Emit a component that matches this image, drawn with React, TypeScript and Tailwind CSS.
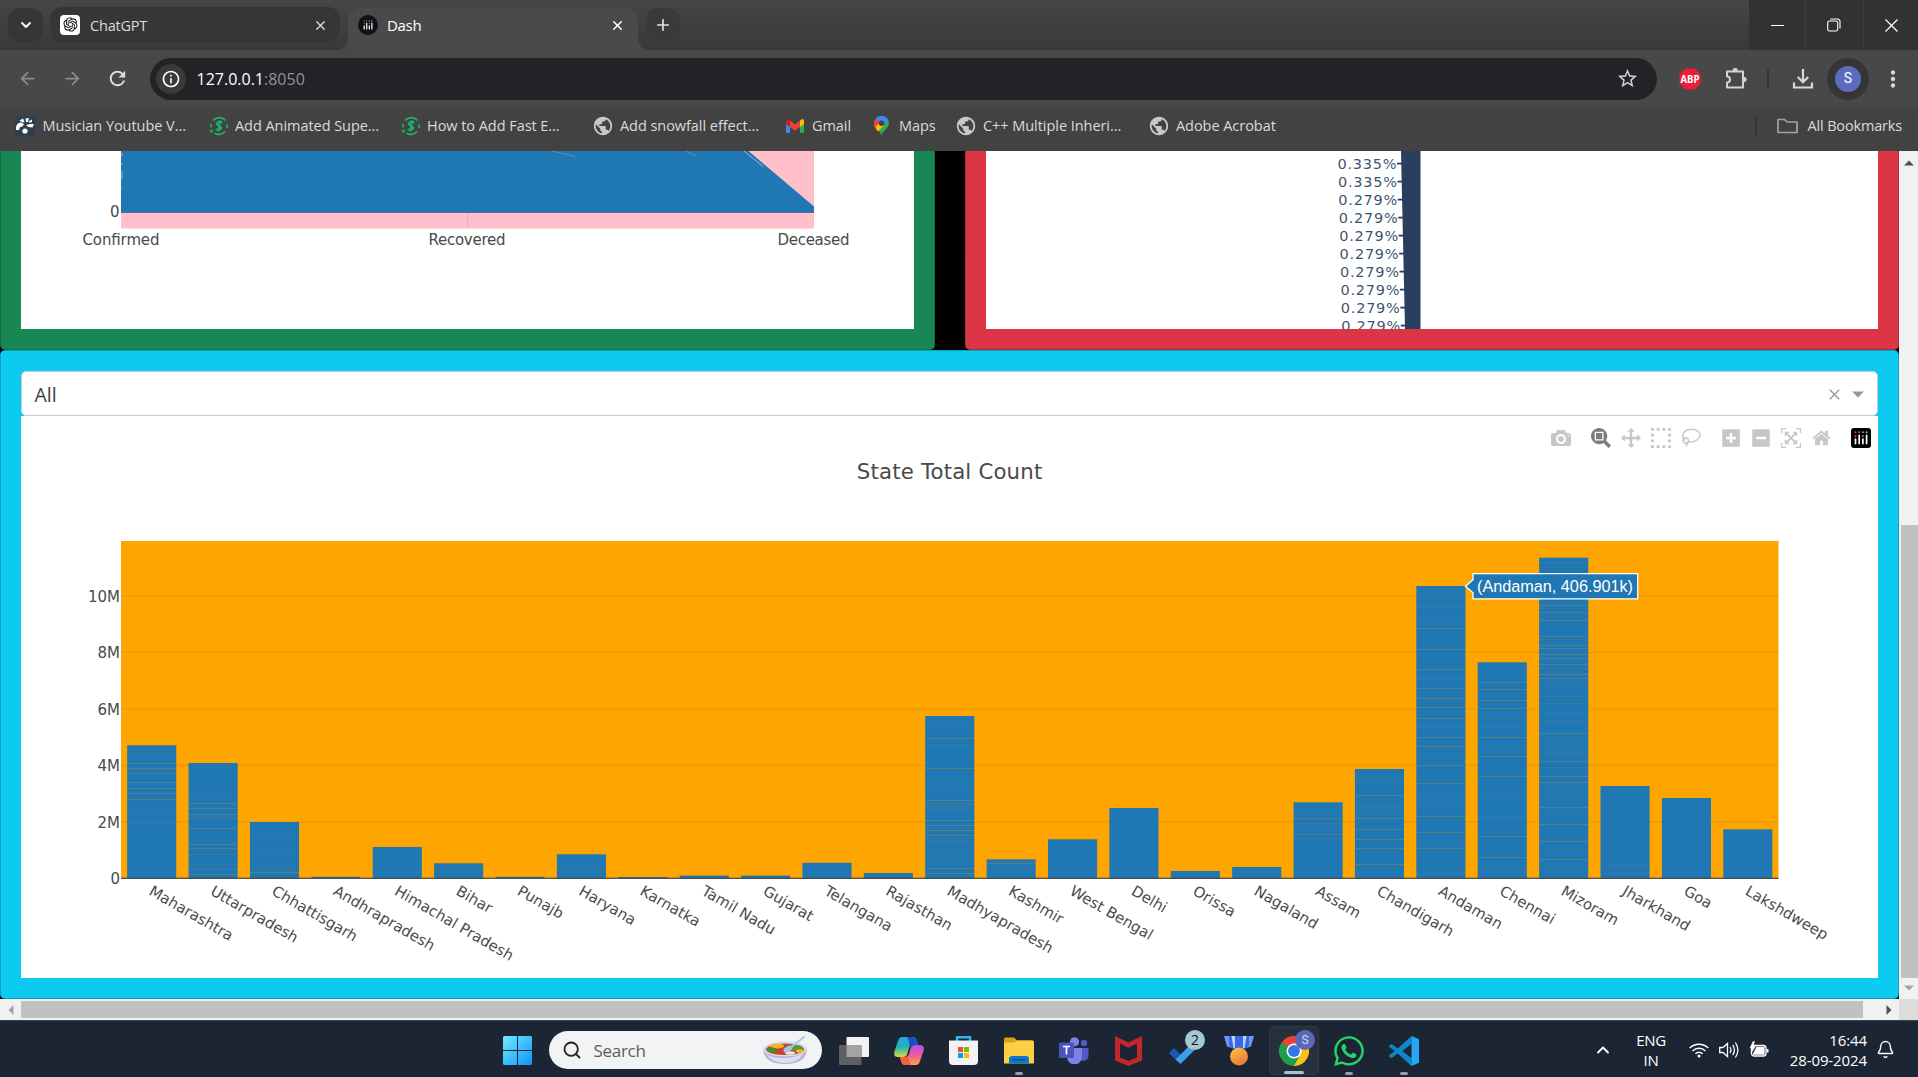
import React from "react";
import { MdArrowBack, MdArrowForward, MdRefresh, MdPublic, MdStarBorder, MdMoreVert, MdOutlineInfo } from "react-icons/md";
import { RiOpenaiFill } from "react-icons/ri";
import { FaWhatsapp } from "react-icons/fa";
import { X, Plus, ChevronDown, ChevronUp, Bell, Search } from "lucide-react";

const PLOT_FONT = "'DejaVu Sans', Verdana, sans-serif";

/* ---------- browser chrome ---------- */

function DashMark({ size, round }: { size: number; round: boolean }) {
  return (
    <svg width={size} height={size} viewBox="0 0 20 20" className="block shrink-0">
      <rect width="20" height="20" rx={round ? 10 : 3} fill={round ? "#101114" : "#000"} />
      <g transform={round ? "translate(3 3) scale(.7)" : undefined}>
        <g fill="#e83a6d">
          <circle cx="4.5" cy="4.2" r="1" /><circle cx="4.5" cy="8" r="1" /><circle cx="8.2" cy="4.2" r="1" />
        </g>
        <circle cx="11.9" cy="4.2" r="1" fill="#a58fd0" />
        <circle cx="15.6" cy="4.2" r="1" fill="#58c6ea" />
        <circle cx="11.9" cy="8" r="1" fill="#8f7fd6" />
        <g stroke="#fff" strokeWidth="1.7" strokeLinecap="round">
          <path d="M4.5 11.2v4.4M8.2 7.4v8.2M11.9 11.2v4.4M15.6 7.4v8.2" />
        </g>
      </g>
    </svg>
  );
}

function TabStrip() {
  return (
    <div className="flex h-[50px] shrink-0 bg-gradient-to-b from-[#464646] to-[#393939]">
      <div className="ml-2 mt-2 flex h-[34px] w-[35px] items-center justify-center rounded-[12px] bg-[#363636] text-white">
        <ChevronDown size={16} strokeWidth={2.8} />
      </div>
      <div className="ml-[7px] mt-[7px] flex h-[35px] w-[290px] items-center rounded-[12px] bg-[#363636] pl-[10px] text-[14.500px] text-[#dcdcdc]">
        <span className="flex h-5 w-5 items-center justify-center rounded-[4px] bg-white text-black"><RiOpenaiFill size={17} /></span>
        <span className="ml-[10px] grow pt-[2px] tracking-[-0.2px]">ChatGPT</span>
        <X size={15} strokeWidth={2.2} className="mr-[12px] mt-px" />
      </div>
      <div className="relative ml-2 mt-2 flex h-[42px] w-[290px] items-start rounded-t-[13px] bg-[#4a4a4a] pl-[10px] text-[15px] text-white">
        <svg className="absolute -left-[12px] bottom-0" width="12" height="12"><path d="M12 0V12H0A12 12 0 0 0 12 0" fill="#484848" /></svg>
        <svg className="absolute -right-[12px] bottom-0" width="12" height="12"><path d="M0 0V12H12A12 12 0 0 1 0 0" fill="#484848" /></svg>
        <div className="flex h-[34px] w-full items-center">
          <DashMark size={20} round />
          <span className="ml-[9px] grow tracking-[-0.3px]">Dash</span>
          <X size={15} strokeWidth={2.4} className="mr-[13px]" />
        </div>
      </div>
      <div className="ml-2 mt-2 flex h-[34px] w-[34px] items-center justify-center rounded-[12px] bg-[#3a3a3a] text-[#e4e4e4]">
        <Plus size={18} strokeWidth={2.2} />
      </div>
      <div className="ml-auto flex h-[50px] w-[169px] bg-[#323232] text-white">
        <div className="flex w-[57px] items-center justify-center border-r border-[#3e3e3e]"><span className="h-px w-[13px] bg-white" /></div>
        <div className="flex w-[58px] items-center justify-center border-r border-[#3e3e3e] pr-[2px]">
          <svg width="14" height="14" fill="none" stroke="#fff" strokeWidth="1.1"><rect x=".7" y="3" width="10" height="10" rx="1.8" /><path d="M3.3 1H10.500a2.500 2.500 0 0 1 2.500 2.500V10.500" /></svg>
        </div>
        <div className="flex w-[54px] items-center justify-center">
          <svg width="13" height="13" stroke="#fff" strokeWidth="1.200"><path d="M.5 .5l12 12M12.500 .5l-12 12" /></svg>
        </div>
      </div>
    </div>
  );
}

function Toolbar() {
  return (
    <div className="flex h-[57px] shrink-0 items-center bg-[#484848] text-[#d8d8d8]">
      <div className="flex w-[150px] items-center pl-[17px] text-[#8a8a8a]">
        <MdArrowBack size={21} /><MdArrowForward size={21} className="ml-[24px]" /><MdRefresh size={23} className="ml-[23px] text-[#dedede]" />
      </div>
      <div className="flex h-[42px] w-[1507px] items-center rounded-full bg-[#222327] pl-[6px]">
        <span className="flex h-[30px] w-[30px] items-center justify-center rounded-full bg-[#3a3a3a] text-white"><MdOutlineInfo size={20} /></span>
        <span className="ml-[10.500px] grow pt-px text-[16px] text-white">127.0.0.1<span className="text-[#929292]">:8050</span></span>
        <MdStarBorder size={23} className="mr-[18px] text-[#d0d0d0]" />
      </div>
      <svg width="22" height="22" viewBox="0 0 22 22" className="ml-[22px]">
        <path d="M6.500.5h9l6 6v9l-6 6h-9l-6-6v-9z" fill="#ee1b3b" />
        <text x="11" y="15" textAnchor="middle" fontFamily="'Open Sans', sans-serif" fontSize="11" fontWeight="700" fill="#fff" textLength="19" lengthAdjust="spacingAndGlyphs">ABP</text>
      </svg>
      <svg width="22" height="22" viewBox="0 0 22 22" className="ml-[24px]" fill="none" stroke="#d4d4d4" strokeWidth="2" strokeLinejoin="round">
        <path d="M2 3.500h16v16H2v-5a3 3 0 0 0 0-6z" /><path d="M8 2.500a2.200 2.200 0 0 1 4.400 0zM19 9.300a2.200 2.200 0 0 1 0 4.400z" fill="#d4d4d4" strokeWidth="1" />
      </svg>
      <span className="ml-[20px] h-5 w-[2px] bg-[#373737]" />
      <svg width="22" height="22" viewBox="0 0 22 22" className="ml-[23px]" fill="none" stroke="#d8d8d8" strokeWidth="2.200">
        <path d="M11 1v13M5.800 9l5.200 5.200L16.200 9M2 14.500v5h18v-5" />
      </svg>
      <span className="ml-[13px] flex h-[42px] w-[42px] items-center justify-center rounded-full bg-[#353535]">
        <span className="flex h-[26px] w-[26px] items-center justify-center rounded-full bg-[#5c6bc0] font-[Roboto] text-[14px] text-white">S</span>
      </span>
      <MdMoreVert size={26} className="ml-[11px]" />
    </div>
  );
}

const Video = () => (
  <svg width="20" height="20" viewBox="0 0 20 20"><rect width="20" height="20" rx="2" fill="#2c4052" /><g fill="#fff"><path d="M1 14Q.5 6.500 6 6.500l3 1.500-1.500 2.500-2.500.5-1 3zM4.500 4.500L8 2.500l1.500 3.500-2 .5zM10.500 2.500l3.500-.5-1 4-2 0zM14 5l3-1.500v2.500l-2.500 1zM15 8h4l-1.500 3.500-4-.5-2.500-2z" /><circle cx="10" cy="15" r="2.600" /></g></svg>
);
const Swirl = () => (
  <svg width="20" height="20" viewBox="0 0 20 20" fill="none" stroke="#1fae6b" strokeWidth="1.700">
    <path d="M4 4.500A8.300 8.300 0 0 1 16.500 4.500M18 8.500V12M16 15.500A8.300 8.300 0 0 1 5.500 17.300M2 8v3.500" />
    <circle cx="2.500" cy="15" r="1.600" fill="#1fae6b" stroke="none" />
    <path d="M13.200 6.700c-2-1.600-5.500-1-5.500 1 0 2.500 4.500 1.800 4.500 4.300 0 2-3.500 2.600-5.400 1M10.800 4.200l-1.300 11.500" strokeWidth="1.900" />
  </svg>
);
const Globe = () => <MdPublic size={22} className="-ml-[2px] shrink-0 text-[#c6c8cc]" />;
const Gmail = () => (
  <svg width="18" height="14" viewBox="0 0 18 14"><path d="M0 2h4v12H1.200A1.200 1.200 0 0 1 0 12.800z" fill="#4285f4" /><path d="M14 2h4v10.800a1.200 1.200 0 0 1-1.200 1.200H14z" fill="#34a853" /><path d="M0 2Q0 .2 2 0l2 1.500V8L0 5z" fill="#c5221f" /><path d="M18 2Q18 .2 16 0l-2 1.500V8l4-3z" fill="#fbbc04" /><path d="M4 1.500L9 5.300l5-3.800V8l-5 3.800L4 8z" fill="#ea4335" /></svg>
);
const Pin = () => (
  <svg width="15" height="20" viewBox="0 0 15 20" className="ml-px"><path d="M7.500 20C7 15 0 12 0 7.500a7.500 7.500 0 0 1 15 0C15 12 8 15 7.500 20" fill="#34a853" /><path d="M0 7.500L6 6l4 3.500L4 15.500C1.500 12.500 0 10 0 7.500" fill="#fbbc04" /><path d="M0 7.500a7.500 7.500 0 0 1 2-5.200l4 3.500-5 6Q0 9 0 7.500" fill="#ea4335" /><path d="M2 2.300A7.500 7.500 0 0 1 14.300 4.400L9 9 5 6z" fill="#4285f4" /><circle cx="7.500" cy="7.300" r="2.700" fill="#424242" /></svg>
);

const bookmarks = [
  { label: "Musician Youtube V...", icon: <Video />, box: "w-[194px]", gap: "w-[27.500px]" },
  { label: "Add Animated Supe...", icon: <Swirl />, box: "w-[192px]", gap: "w-[26px]" },
  { label: "How to Add Fast E...", icon: <Swirl />, box: "w-[193px]", gap: "w-[26px]" },
  { label: "Add snowfall effect...", icon: <Globe />, box: "w-[192px]", gap: "w-[26px]" },
  { label: "Gmail", icon: <Gmail />, box: "w-[87px]", gap: "w-[26px]" },
  { label: "Maps", icon: <Pin />, box: "w-[84px]", gap: "w-[26px]" },
  { label: "C++ Multiple Inheri...", icon: <Globe />, box: "w-[193px]", gap: "w-[26px]" },
  { label: "Adobe Acrobat", icon: <Globe />, box: "w-[160px]", gap: "w-[26px]" },
];

function BookmarksBar() {
  return (
    <div className="flex h-[44px] shrink-0 items-start bg-[#424242] pl-[15px] text-[14.500px] text-[#dadada]">
      {bookmarks.map((b) => (
        <div key={b.label} className={"flex h-[38px] shrink-0 items-center whitespace-nowrap " + b.box}>
          <span className={"flex shrink-0 " + b.gap}>{b.icon}</span>
          <span className="tracking-[-0.050px]">{b.label}</span>
        </div>
      ))}
      <div className="ml-auto flex h-[38px] items-center pr-[16px]">
        <span className="mr-[20px] h-5 w-[2px] bg-[#363636]" />
        <svg width="21" height="16" viewBox="0 0 21 16" fill="none" stroke="#a4a4a4" strokeWidth="1.700" strokeLinejoin="round"><path d="M1 14.500V1.500h6.500l2.500 2.500h10v10.500z" /></svg>
        <span className="ml-[10px] tracking-[-0.170px]">All Bookmarks</span>
      </div>
    </div>
  );
}

/* ---------- dashboard ---------- */

function AreaChart() {
  return (
    <svg width="893" height="178" viewBox="21 151 893 178" className="block bg-white" fontFamily={PLOT_FONT} fontSize="15" fill="#4a4a4a">
      <rect x="121" y="151" width="693" height="77.500" fill="#ffc0cb" />
      <path d="M467.500 151v77.500" stroke="#444" strokeOpacity=".12" />
      <path d="M121 151H748.500L814 206.500V212.800H121z" fill="#1f77b4" />
      <path d="M744 151l19 15.500" stroke="#ffc0cb" opacity=".7" fill="none" />
      <path d="M552 151l23 5.500M686 151l10 4.500" stroke="#ffc0cb" opacity=".3" fill="none" />
      <path d="M122 153v3M122 163v2M122 171v8M122 187v1" stroke="#9ab4d4" strokeWidth="2" opacity=".5" />
      <path d="M121 212.500H814" stroke="#444" strokeOpacity=".35" />
      <text x="119.500" y="217" textAnchor="end">0</text>
      <text x="121" y="245" textAnchor="middle" textLength="77">Confirmed</text>
      <text x="467" y="245" textAnchor="middle" textLength="77">Recovered</text>
      <text x="813.500" y="245" textAnchor="middle" textLength="72">Deceased</text>
    </svg>
  );
}

function PieLabels() {
  const rows = ["0.335%", "0.335%", "0.279%", "0.279%", "0.279%", "0.279%", "0.279%", "0.279%", "0.279%", "0.279%"];
  return (
    <svg width="892" height="178" viewBox="986 151 892 178" className="block bg-white" fontFamily={PLOT_FONT} fontSize="14.500" fill="#2a3f5f">
      <path d="M1401 151H1420.500V329H1405z" />
      {rows.map((r, i) => (
        <g key={i}>
          <text x={1396.5 + i * 0.42} y={169 + i * 18} textAnchor="end" textLength="59" fillOpacity=".92">{r}</text>
          <rect x={1397 + i * 0.42} y={162.700 + i * 18} width="6" height="1.800" />
        </g>
      ))}
    </svg>
  );
}

type Bar = { name: string; top: number; lines?: number[]; faint?: number[] };
const bars: Bar[] = [
  { name: "Maharashtra", top: 745.3, lines: [763, 768, 773, 782, 788, 793, 799], faint: [749, 753, 813, 823] },
  { name: "Uttarpradesh", top: 763, lines: [803, 808, 814, 828, 844, 848, 874], faint: [798, 817, 819, 854, 864, 869] },
  { name: "Chhattisgarh", top: 822, lines: [872], faint: [838, 852, 869] },
  { name: "Andhrapradesh", top: 876.8 },
  { name: "Himachal Pradesh", top: 847 },
  { name: "Bihar", top: 863.3, faint: [869] },
  { name: "Punajb", top: 876.8 },
  { name: "Haryana", top: 854.3, faint: [867] },
  { name: "Karnatka", top: 877 },
  { name: "Tamil Nadu", top: 875.6 },
  { name: "Gujarat", top: 875.6 },
  { name: "Telangana", top: 862.8 },
  { name: "Rajasthan", top: 873 },
  { name: "Madhyapradesh", top: 716, lines: [738, 768, 800, 820, 825, 830, 835, 868, 873], faint: [722, 744, 779, 785, 803, 805, 808, 838, 841, 843, 854, 859] },
  { name: "Kashmir", top: 859.3, lines: [863], faint: [869] },
  { name: "West Bengal", top: 839.3 },
  { name: "Delhi", top: 808 },
  { name: "Orissa", top: 871 },
  { name: "Nagaland", top: 867 },
  { name: "Assam", top: 802.3, lines: [818, 834], faint: [813, 823, 828, 838] },
  { name: "Chandigarh", top: 769, lines: [795, 818, 829, 839, 848, 864], faint: [778, 807, 814] },
  { name: "Andaman", top: 586, lines: [628, 649, 669, 688, 698, 707, 718, 737, 746, 765, 783, 816, 832, 848], faint: [597, 607, 618, 679, 727, 757, 795, 801, 842, 873] },
  { name: "Chennai", top: 662.3, lines: [682, 689, 700, 708, 737, 756, 776, 836, 857], faint: [718, 727, 747, 796, 816, 869] },
  { name: "Mizoram", top: 557.7, lines: [605, 612, 620, 636, 645, 648, 654, 658, 664, 674, 678, 733, 761, 776, 782, 807, 824, 841, 859], faint: [562, 567, 608, 639, 668, 685, 696, 703, 712, 720, 738, 746, 752, 767, 790, 797, 814, 849, 867] },
  { name: "Jharkhand", top: 786, faint: [864, 873] },
  { name: "Goa", top: 798 },
  { name: "Lakshdweep", top: 829.3 },
];
const STEP = 61.39;
const ZERO = 878.4;

function StateChart() {
  return (
    <svg width="1857" height="562" viewBox="21 416 1857 562" className="block bg-white" fontFamily={PLOT_FONT} fontSize="15" fill="#4a4a4a">
      <text x="949.500" y="478.700" textAnchor="middle" fontSize="21.250" textLength="185.500">State Total Count</text>
      <rect x="121" y="541" width="1657.500" height="337.500" fill="orange" />
      {[1, 2, 3, 4, 5].map((n) => (
        <rect key={n} x="121" y={ZERO - n * 56.5 - 0.7} width="1657.500" height="1.300" fill="#444" fillOpacity=".12" />
      ))}
      {bars.map((b, i) => {
        const x = 121 + STEP * (i + 0.1);
        const w = STEP * 0.8;
        return (
          <g key={b.name}>
            <rect x={x} y={b.top} width={w} height={ZERO - b.top} fill="#1f77b4" />
            {(b.lines ?? []).map((y) => <rect key={y} x={x} y={y} width={w} height="1" fill="#9b8c4b" fillOpacity=".45" />)}
            {(b.faint ?? []).map((y) => <rect key={y} x={x} y={y} width={w} height="1" fill="#9b8c4b" fillOpacity=".18" />)}
          </g>
        );
      })}
      <rect x="121" y="877.700" width="1657.500" height="1.200" fill="#444" />
      {["0", "2M", "4M", "6M", "8M", "10M"].map((t, n) => (
        <text key={t} x="120" y={ZERO - n * 56.5 + 5.6} textAnchor="end">{t}</text>
      ))}
      {bars.map((b, i) => {
        const x = 121 + STEP * (i + 0.5) - 3.7;
        return <text key={b.name} x={x} y="894" transform={`rotate(30 ${x} 894)`} fontSize="14.900">{b.name}</text>;
      })}
      <path d="M1465.500 586.300l7.500-6.500v-6.300H1637.700v25.300H1473v-6z" fill="#1f77b4" stroke="#fff" strokeWidth="1.250" />
      <text x="1477" y="592" fontFamily="'Liberation Sans', Arial, sans-serif" fontSize="16.250" fill="#fff" textLength="156">(Andaman, 406.901k)</text>
    </svg>
  );
}

const modeIcons: { d: string; w: number; on?: boolean; cls: string }[] = [
  { w: 1000, cls: "mr-[20px]", d: "m500 450c-83 0-150-67-150-150 0-83 67-150 150-150 83 0 150 67 150 150 0 83-67 150-150 150z m400 150h-120c-16 0-34 13-39 29l-31 93c-6 15-23 28-40 28h-340c-16 0-34-13-39-28l-31-94c-6-15-23-28-40-28h-120c-55 0-100-45-100-100v-450c0-55 45-100 100-100h800c55 0 100 45 100 100v450c0 55-45 100-100 100z m-400-550c-138 0-250 112-250 250 0 138 112 250 250 250 138 0 250-112 250-250 0-138-112-250-250-250z m365 380c-19 0-35 16-35 35 0 19 16 35 35 35 19 0 35-16 35-35 0-19-16-35-35-35z" },
  { w: 1000, on: true, cls: "mr-[10px]", d: "m1000-25l-250 251c40 63 63 138 63 218 0 224-182 406-407 406-224 0-406-182-406-406s183-406 407-406c80 0 155 22 218 62l250-250 125 125z m-812 250l0 438 437 0 0-438-437 0z m62 375l313 0 0-312-313 0 0 312z" },
  { w: 1000, cls: "mr-[10px]", d: "m1000 350l-187 188 0-125-250 0 0 250 125 0-188 187-187-187 125 0 0-250-250 0 0 125-188-188 186-187 0 125 252 0 0-250-125 0 187-188 188 188-125 0 0 250 250 0 0-126 187 188z" },
  { w: 1000, cls: "mr-[10px]", d: "m0 850l0-143 143 0 0 143-143 0z m286 0l0-143 143 0 0 143-143 0z m285 0l0-143 143 0 0 143-143 0z m286 0l0-143 143 0 0 143-143 0z m-857-286l0-143 143 0 0 143-143 0z m857 0l0-143 143 0 0 143-143 0z m-857-285l0-143 143 0 0 143-143 0z m857 0l0-143 143 0 0 143-143 0z m-857-286l0-143 143 0 0 143-143 0z m286 0l0-143 143 0 0 143-143 0z m285 0l0-143 143 0 0 143-143 0z m286 0l0-143 143 0 0 143-143 0z" },
];
const modeIcons2: { d: string; w: number; cls: string }[] = [
  { w: 875, cls: "w-[18px] mr-[12px]", d: "m1 787l0-875 875 0 0 875-875 0z m687-500l-187 0 0-187-125 0 0 187-188 0 0 125 188 0 0 187 125 0 0-187 187 0 0-125z" },
  { w: 875, cls: "w-[18px] mr-[11px]", d: "m0 788l0-876 875 0 0 876-875 0z m688-500l-500 0 0 125 500 0 0-125z" },
  { w: 1000, cls: "w-[20px] mr-[11px]", d: "m250 850l-187 0-63 0 0-62 0-188 63 0 0 188 187 0 0 62z m688 0l-188 0 0-62 188 0 0-188 62 0 0 188 0 62-62 0z m-875-938l0 188-63 0 0-188 0-62 63 0 187 0 0 62-187 0z m875 188l0-188-188 0 0-62 188 0 62 0 0 62 0 188-62 0z m-125 188l-1 0-93-94-156 156 156 156 92-93 2 0 0 250-250 0 0-2 93-92-156-156-156 156 94 92 0 2-250 0 0-250 0 0 93 93 157-156-157-156-93 94 0 0 0-250 250 0 0 0-94 93 156 157 156-157-93-93 0 0 250 0 0 250z" },
  { w: 928.6, cls: "w-[19px] mr-[20px]", d: "m786 296v-267q0-15-11-26t-25-10h-214v214h-143v-214h-214q-15 0-25 10t-11 26v267q0 1 0 2t0 2l321 264 321-264q1-1 1-4z m124 39l-34-41q-5-5-12-6h-2q-7 0-12 3l-386 322-386-322q-7-4-13-4-7 2-12 7l-35 41q-4 5-3 13t6 12l401 334q18 15 42 15t43-15l136-114v109q0 8 5 13t13 5h107q8 0 13-5t5-13v-227l122-102q5-5 6-12t-4-13z" },
];

function ModeBar() {
  return (
    <div className="absolute right-[7px] top-[12px] flex h-5">
      {modeIcons.map((m, i) => (
        <svg key={i} viewBox={`0 0 ${m.w} 1000`} className={"h-5 w-5 " + m.cls} fill={m.on ? "#7c7c7c" : "#c7c7c7"}><path d={m.d} transform="matrix(1 0 0 -1 0 850)" /></svg>
      ))}
      <svg viewBox="0 0 20 20" className="mr-[21px] h-5 w-5" fill="none" stroke="#c7c7c7" strokeWidth="1.400">
        <path d="M4.500 12.500C-.5 9.500 1 2.500 9 1.500c7-.8 11.500 3 9.500 7.500-1.600 3.700-6.500 5.800-11 4.500" /><circle cx="4.700" cy="12.500" r="2.800" /><path d="M7 13.500c.3 1.800-1.800 2-1.500 5" />
      </svg>
      {modeIcons2.map((m, i) => (
        <svg key={i} viewBox={`0 0 ${m.w} 1000`} className={"h-5 " + m.cls} fill="#c7c7c7"><path d={m.d} transform="matrix(1 0 0 -1 0 850)" /></svg>
      ))}
      <DashMark size={20} round={false} />
    </div>
  );
}

function Page() {
  return (
    <div className="w-[1899px] overflow-hidden bg-black">
      <div className="flex h-[199px] justify-between">
        <div className="w-[935px] rounded-b-[5px] border border-t-0 border-black/20 bg-[#198754] pl-5"><AreaChart /></div>
        <div className="w-[934px] rounded-b-[5px] border border-t-0 border-black/20 bg-[#dc3545] pl-5"><PieLabels /></div>
      </div>
      <div className="h-[649px] rounded-[5px] border border-black/20 bg-[#0dcaf0] px-5 pt-5">
        <div className="bg-white">
          <div className="bg-[#0dcaf0]">
            <div className="flex h-[45px] items-center rounded-[5px] border border-[#ccc] bg-white pl-[12.500px] pr-[13px] text-[19.500px] text-[#3c3c3c]">
              <span className="grow pt-[2px]">All</span>
              <svg width="11" height="11" className="mr-[12px] mt-px" stroke="#999" strokeWidth="1.400"><path d="M.8.8l9.400 9.400M10.200.8L.8 10.200" /></svg>
              <svg width="12" height="7" className="mt-px"><path d="M0 .5h12L6 6.500z" fill="#999" /></svg>
            </div>
          </div>
          <div className="relative">
            <StateChart />
            <ModeBar />
          </div>
        </div>
      </div>
    </div>
  );
}

/* ---------- taskbar ---------- */

function Slot({ children, run, active }: { children: React.ReactNode; run?: boolean; active?: boolean }) {
  return (
    <div className="flex h-[57px] w-[55px] shrink-0 items-start justify-center pt-[5px]">
      <div className={"relative flex h-[49px] w-[50px] items-center justify-center rounded-[5px] " + (active ? "border border-white/5 bg-white/5" : "")}>
        {children}
        {run && <span className={"absolute bottom-0 h-[3px] rounded-full " + (active ? "w-5 bg-[#a3c5d4]" : "w-2 bg-[#9a9da3]")} />}
      </div>
    </div>
  );
}

function Taskbar() {
  return (
    <div className="flex h-[57px] shrink-0 border-t border-[#3b4450] bg-[#1c2533] text-white">
      <svg width="29" height="29" viewBox="0 0 29 29" className="ml-[503px] mt-[15px]">
        <defs><linearGradient id="win" x1="0" y1="0" x2="1" y2="1" gradientUnits="objectBoundingBox"><stop offset="0" stopColor="#6eeaff" /><stop offset="1" stopColor="#1095f8" /></linearGradient></defs>
        <path d="M1 0H14V14H0V1zM15 0H28l1 1V14H15zM0 15H14V29H1L0 28zM15 15H29V28l-1 1H15z" fill="url(#win)" />
      </svg>
      <div className="ml-[17px] mt-[10px] flex h-[38px] w-[273px] items-center rounded-full bg-[#f1f3f5] pl-[13px] pr-[14px]">
        <Search size={20} strokeWidth={2.200} color="#222" />
        <span className="ml-[11.500px] grow pt-px text-[17px] tracking-[-0.300px] text-[#5c5c5c]">Search</span>
        <svg width="46" height="29" viewBox="0 0 46 29">
          <path d="M1 13q1 15 22 15t22-15z" fill="#b5b2d2" /><path d="M4 18q6 9 19 9t18-9q-10 4-20 4T4 18" fill="#dedcf0" />
          <ellipse cx="23" cy="13" rx="22" ry="7.500" fill="#dcdaf0" /><ellipse cx="23" cy="13.300" rx="19" ry="5.800" fill="#b5522a" />
          <ellipse cx="15" cy="10" rx="7" ry="2.500" fill="#f3b521" /><ellipse cx="10" cy="14" rx="5" ry="2.500" fill="#4d8a2c" /><ellipse cx="35" cy="12" rx="6" ry="3" fill="#5d9a36" /><ellipse cx="19" cy="15.500" rx="5" ry="2.500" fill="#d63a2a" /><ellipse cx="38" cy="15" rx="4" ry="1.800" fill="#f0b830" /><ellipse cx="28" cy="17" rx="5" ry="1.800" fill="#f3e3cf" />
          <path d="M28 12L42 1" stroke="#a9cdf2" strokeWidth="2" strokeLinecap="round" /><ellipse cx="26" cy="13" rx="5" ry="2.600" fill="#9fc6ef" transform="rotate(-30 26 13)" />
        </svg>
      </div>
      <div className="ml-[4.500px] flex">
        <Slot><svg width="30" height="28" viewBox="0 0 30 28"><rect x="7.500" width="22.500" height="20" rx="1" fill="#f2f2f2" /><rect y="8" width="22.500" height="20" rx="1" fill="#5e5f62" /><rect x="7.500" y="8" width="15" height="12" fill="#a3a3a3" /></svg></Slot>
        <Slot>
          <svg width="30" height="28" viewBox="0 0 30 28">
            <defs>
              <linearGradient id="cpa" x1="0" y1="0" x2="0" y2="1"><stop offset="0" stopColor="#22a4ee" /><stop offset=".5" stopColor="#27b0b5" /><stop offset="1" stopColor="#d8dc3a" /></linearGradient>
              <linearGradient id="cpb" x1="0" y1="0" x2="0" y2="1"><stop offset="0" stopColor="#a755ef" /><stop offset=".5" stopColor="#ee5a9a" /><stop offset="1" stopColor="#fba346" /></linearGradient>
            </defs>
            <path d="M8 0H19q3 0 4 4l1 4H18q-2 0-3 3l-2 7q-1 2-4 2H4q-5 0-3.500-6L4 4Q5 0 8 0" fill="url(#cpa)" />
            <path d="M13 0h6q3 0 4 4l1 4H18q-1.500 0-2.500 1Q15 3 13 0" fill="#1c4fc4" />
            <path d="M22 28H11q-3 0-4-4l-1-4h6q2 0 3-3l2-7q1-2 4-2h5q5 0 3.500 6L26 24q-1 4-4 4" fill="url(#cpb)" />
            <path d="M17 28h-6q-3 0-4-4l-1-4h6q1.500 0 2.500-1 .5 6 2.500 9" fill="#f0603a" />
          </svg>
        </Slot>
        <Slot><svg width="29" height="29" viewBox="0 0 29 29" className="-ml-px"><path d="M8 5V1.200h13V5" fill="none" stroke="#2cb6f2" strokeWidth="2.400" /><path d="M0 4.500H29V25a4 4 0 0 1-4 4H4a4 4 0 0 1-4-4z" fill="#f3f3f3" /><path d="M9 11h5v5H9z" fill="#f25022" /><path d="M15 11h5v5h-5z" fill="#7fba00" /><path d="M9 17h5v5H9z" fill="#00a4ef" /><path d="M15 17h5v5h-5z" fill="#ffb900" /></svg></Slot>
        <Slot run><svg width="30" height="27" viewBox="0 0 30 27"><path d="M0 2a1.500 1.500 0 0 1 1.500-1.500H10l3 3H28.500A1.500 1.500 0 0 1 30 5v8H0z" fill="#e0a010" /><path d="M0 5.500h10l3-2h15.500L30 5v21.500H0z" fill="#fccf45" /><path d="M5 26.500V22a3 3 0 0 1 3-3h14a3 3 0 0 1 3 3v4.500z" fill="#0f78c8" /><path d="M8.500 22.700h13" stroke="#0a4f8c" strokeWidth="1.400" /></svg></Slot>
        <Slot><svg width="30" height="27" viewBox="0 0 30 27"><circle cx="15.500" cy="4.800" r="4.600" fill="#7b83eb" /><circle cx="25" cy="6" r="3.200" fill="#5059c9" /><path d="M20 11h9.500v8a5 5 0 0 1-9.500 2z" fill="#5059c9" /><path d="M8 11h15v9a7 7 0 0 1-15 0z" fill="#7b83eb" /><rect y="5.500" width="15" height="15.500" rx="1.500" fill="#4b53bc" /><path d="M4 9.500h7M7.500 9.500v8" stroke="#fff" strokeWidth="1.700" /></svg></Slot>
        <Slot><svg width="27" height="30" viewBox="0 0 27 30" className="-ml-px"><path d="M0 0l13.500 6.500L27 0v24.500L13.500 30 0 24.500zM5 7.500v14l8.500 3.500 8.500-3.500v-14l-8.500 4.300z" fill="#c4262c" fillRule="evenodd" /></svg></Slot>
        <Slot>
          <svg width="30" height="28" viewBox="0 0 30 28"><path d="M0 16l5-5 7.500 7.500-5 5z" fill="#1b58b8" /><path d="M6.500 22.500L24 5l5 4.500L11.500 27z" fill="#3f9ee8" /></svg>
          <span className="absolute left-[26px] top-[4px] flex h-5 w-5 items-center justify-center rounded-full bg-[#a3c8d4] text-[14px] leading-none text-[#111]">2</span>
        </Slot>
        <Slot><svg width="30" height="30" viewBox="0 0 30 30"><defs><linearGradient id="medal" x1="0" y1="0" x2=".5" y2="1"><stop offset="0" stopColor="#ffc53c" /><stop offset="1" stopColor="#ed7a3e" /></linearGradient></defs><path d="M0 0h6l2 12-5-1.500zM30 0h-6l-2 12 5-1.500z" fill="#6f95f5" /><path d="M5 0h20v9q-2 4-5 4H10q-3 0-5-4z" fill="#3569ea" /><path d="M7.500 0h3.500v12H9.500zM22.500 0H19v12h1.500z" fill="#bcd2fc" /><circle cx="15" cy="20.500" r="9" fill="url(#medal)" /></svg></Slot>
        <Slot run active>
          <svg width="30" height="30" viewBox="0 0 48 48"><path d="M24 24L3.200 12A24 24 0 0 1 44.800 12z" fill="#ea4335" /><path d="M24 24L44.800 12A24 24 0 0 1 24 48z" fill="#fbc116" /><path d="M24 24V48A24 24 0 0 1 3.200 12z" fill="#1e9e48" /><path d="M24 12H44.800L34.500 30 24 48z" fill="#fbc116" /><path d="M13.600 30L3.200 12l10 3zM13.600 30L24 48l10.400-18z" fill="#1e9e48" /><path d="M34.500 30L24 48H26l18-30z" fill="#fbc116" /><circle cx="24" cy="24" r="12" fill="#fff" /><circle cx="24" cy="24" r="9.500" fill="#3077ea" /></svg>
          <span className="absolute left-[25px] top-[3px] flex h-[20px] w-[20px] items-center justify-center rounded-full bg-[#5b68b8] font-[Roboto] text-[12px] text-[#d4d8ee]">S</span>
        </Slot>
        <Slot run><FaWhatsapp size={34} color="#25d366" /></Slot>
        <Slot run>
          <svg width="30" height="30" viewBox="0 0 100 100"><path d="M75 0L29 42 9 27 1 30.500v6L20 50 1 63.500v6L9 73l20-15 46 42V73L44 50l31-23z" fill="#0f85d0" /><path d="M75 0l25 11v78L75 100V0" fill="#26a7f2" /></svg>
        </Slot>
      </div>
      <div className="ml-auto flex h-[57px] items-center text-[15px] leading-5">
        <ChevronUp size={20} strokeWidth={2.200} className="mr-[22px]" />
        <div className="mr-[22px] w-[32px] pt-px text-center text-[15px] tracking-[-0.300px]">ENG<br />IN</div>
        <svg width="20" height="16" viewBox="0 0 20 16" fill="none" stroke="#fff" strokeWidth="1.500"><path d="M.7 6a13.200 13.200 0 0 1 18.600 0M3.600 9a9 9 0 0 1 12.800 0M6.400 11.800a5 5 0 0 1 7.200 0" /><circle cx="10" cy="14" r="1.500" fill="#fff" stroke="none" /></svg>
        <svg width="20" height="18" viewBox="0 0 20 18" fill="none" stroke="#fff" strokeWidth="1.300" className="ml-[10px]"><path d="M.7 6.500H4l4.500-4v13L4 11.500H.7zM11 6q2 3 0 6M13.700 3.800q3.500 5.200 0 10.400M16.400 1.500q5 7.500 0 15" /></svg>
        <svg width="20" height="18" viewBox="0 0 20 18" fill="none" stroke="#fff" strokeWidth="1.300" className="ml-[10px]"><rect x="2.500" y="4.500" width="14.500" height="10.500" rx="2.500" /><path d="M8 6.500h7v6.500H4.500z" fill="#fff" /><path d="M18.500 8v3.500" strokeWidth="2" /><path d="M4 .5L1 7h2.500L2 12l4.500-6.500H4L5.500.5z" fill="#fff" strokeWidth=".5" /></svg>
        <div className="ml-[15px] w-[83px] whitespace-nowrap text-right text-[15px] tracking-[-0.100px]">16:44<br />28-09-2024</div>
        <Bell size={19} strokeWidth={1.800} className="ml-[9px] mr-[23px]" />
      </div>
    </div>
  );
}

export default function App() {
  return (
    <div className="flex h-[1077px] w-[1918px] flex-col overflow-hidden font-['Open_Sans',sans-serif]">
      <TabStrip />
      <Toolbar />
      <BookmarksBar />
      <div className="flex h-[848px] shrink-0">
        <Page />
        <div className="flex w-[19px] flex-col items-center bg-[#f1f1f1]">
          <svg width="10" height="6" className="mt-[9px]"><path d="M0 5.500L5 .5l5 5z" fill="#505050" /></svg>
          <div className="ml-[2px] mt-[359px] h-[453px] w-[17px] bg-[#c1c1c1]" />
          <svg width="10" height="6" className="mt-[7px]"><path d="M0 .5h10l-5 5z" fill="#a3a3a3" /></svg>
        </div>
      </div>
      <div className="flex h-[21px] shrink-0 items-center bg-[#f1f1f1]">
        <svg width="6" height="10" className="ml-[8px]"><path d="M5.500 0v10l-5-5z" fill="#a3a3a3" /></svg>
        <div className="ml-[7px] h-[17px] w-[1842px] bg-[#c1c1c1]" />
        <svg width="6" height="10" className="ml-[23px]"><path d="M.5 0v10l5-5z" fill="#505050" /></svg>
        <div className="ml-auto h-[21px] w-[19px] bg-[#dcdcdc]" />
      </div>
      <Taskbar />
    </div>
  );
}
